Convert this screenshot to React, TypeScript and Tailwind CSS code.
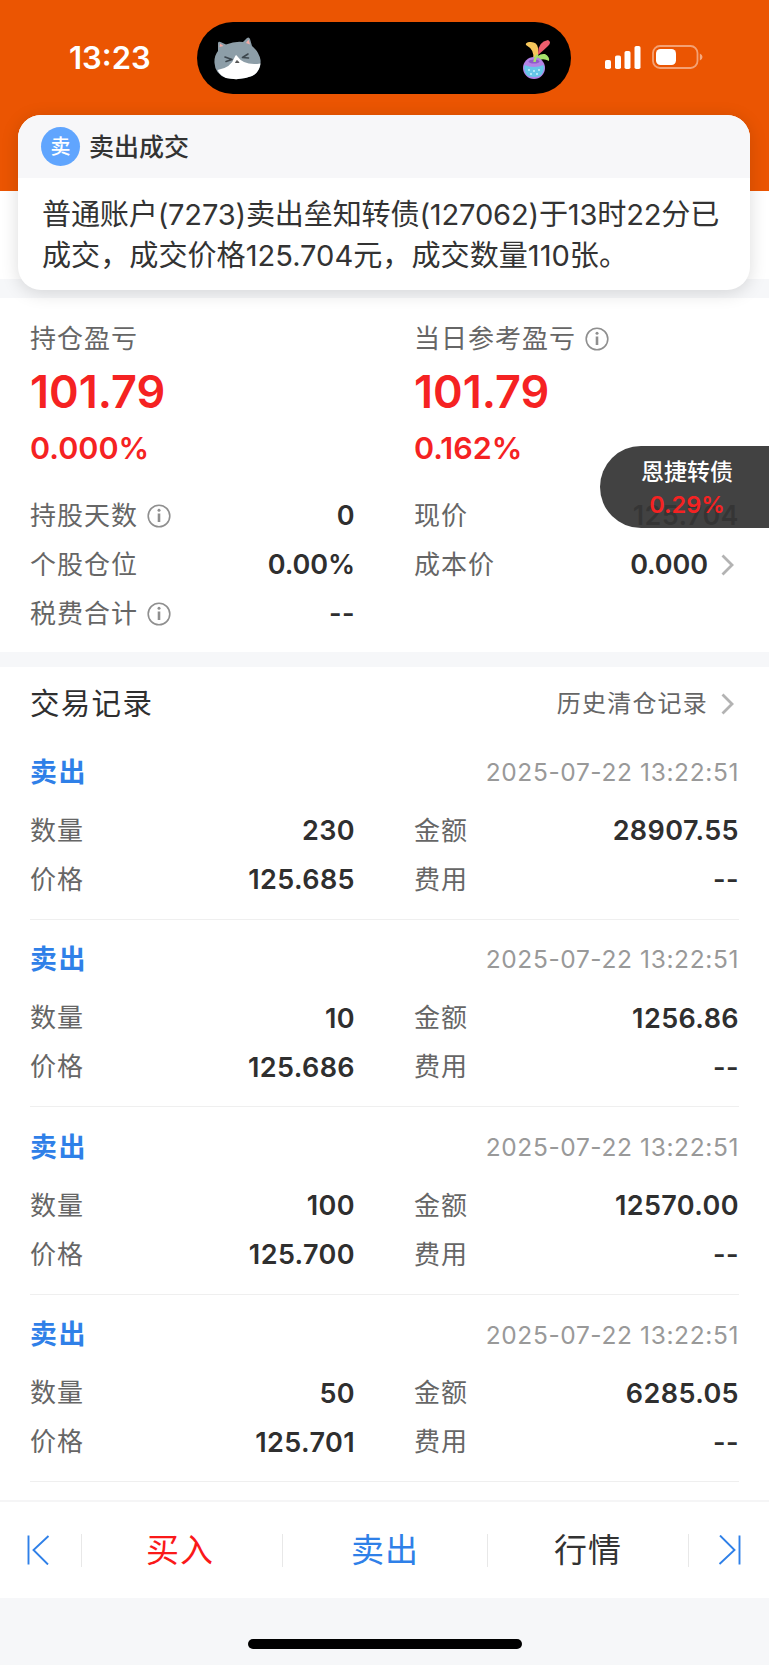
import { Fragment } from "react";

type Trade = {
  quantity: string;
  amount: string;
  price: string;
};

const TRADE_TIME = "2025-07-22 13:22:51";

const TRADES: Trade[] = [
  { quantity: "230", amount: "28907.55", price: "125.685" },
  { quantity: "10", amount: "1256.86", price: "125.686" },
  { quantity: "100", amount: "12570.00", price: "125.700" },
  { quantity: "50", amount: "6285.05", price: "125.701" },
];

const CatFace = () => (
  <svg className="h-[43px] w-[48px]" viewBox="0 0 48 43">
    <path d="M4 14 L4 6 Q4.500 4 6.500 5 L12 7.500 Q21 4 29 5 L33 1 Q35 -0.500 36 2 L38 9 Q45 15 46.500 23 Q47.500 34 38 39 Q26 44 12 41 Q1 37 0.500 26 Q0 19 4 14Z" fill="#8d9ea8" />
    <path d="M5.500 10 L6 6.500 L9.500 9Z M32 6 L34.500 2.500 L36 7.500Z" fill="#f3aaa4" />
    <path d="M3.500 33 Q17 31 21 19.500 Q22 17 23.500 19.500 Q30 29 46.500 26.500 Q45 36 38 39 Q26 44 12 41 Q6 38.500 3.500 33Z" fill="#fff" />
    <path d="M11 20 L18 22.500 L12 24.500 M34 17 L28.500 20.500 L34.500 21" fill="none" stroke="#3d474e" strokeWidth="1.600" strokeLinecap="round" strokeLinejoin="round" />
    <path d="M21.500 25.500 L23 23.500 L25 25.500Z" fill="#555" stroke="#555" />
  </svg>
);

const Plant = () => (
  <svg className="mt-1 h-[42px] w-[30px]" viewBox="0 0 30 42">
    <path d="M11 20 Q13 11 4 6 Q3 4 7 3 Q15 2 16 9 Q17 15 15 21Z" fill="#f6c65b" />
    <path d="M16 14 Q16 3 26 1 Q30 3 26 7 Q22 11 16 16Z" fill="#ee5d6c" />
    <path d="M13 23 Q15 14 23 15 Q28 18 27 22 Q20 18 14 23Z" fill="#a6e36b" />
    <circle cx="12" cy="29" r="11" fill="#b483e6" />
    <path d="M2.500 26 Q12 30 21.500 26 Q23 33 18 37 Q12 39 6 37 Q1 33 2.500 26Z" fill="#67c6e8" />
    <ellipse cx="12" cy="22.500" rx="5.500" ry="2" fill="#8e5cc9" />
    <path d="M12.500 23 Q13 18 16 16" fill="none" stroke="#a6e36b" strokeWidth="2.500" />
    <g fill="#c8f1fb">
      <circle cx="7" cy="31" r="1" />
      <circle cx="12" cy="32" r="1" />
      <circle cx="17" cy="31" r="1" />
      <circle cx="9" cy="35" r="1" />
      <circle cx="15" cy="35" r="1" />
    </g>
  </svg>
);

const Signal = () => (
  <svg className="h-[23px] w-[36px]" viewBox="0 0 36 23" fill="#fff">
    <rect x="0" y="14" width="6" height="9" rx="1.800" />
    <rect x="10" y="9.500" width="6" height="13.500" rx="1.800" />
    <rect x="19.500" y="5" width="6" height="18" rx="1.800" />
    <rect x="29.500" y="0" width="6" height="23" rx="1.800" />
  </svg>
);

const Battery = () => (
  <svg className="h-[24px] w-[51px]" viewBox="0 0 51 24">
    <rect x="1" y="1" width="44.500" height="22" rx="7" fill="none" stroke="#fff" strokeOpacity="0.450" strokeWidth="1.800" />
    <rect x="4" y="4" width="20" height="16" rx="4.500" fill="#fff" />
    <path d="M47.800 8.500 Q50.500 9.500 50.500 12 Q50.500 14.500 47.800 15.500Z" fill="#fff" fillOpacity="0.500" />
  </svg>
);

const Info = () => (
  <svg className="ml-[9px] h-[24px] w-[24px]" viewBox="0 0 24 24">
    <circle cx="12" cy="12" r="10.800" fill="none" stroke="#8f8f8f" strokeWidth="1.600" />
    <circle cx="12" cy="6.300" r="1.500" fill="#8f8f8f" />
    <path d="M12 9.500V18" stroke="#8f8f8f" strokeWidth="2.600" />
  </svg>
);

const Chevron = () => (
  <svg className="mr-[5px] h-[22px] w-[13px]" viewBox="0 0 13 22">
    <path d="M1.500 1.500L11 11L1.500 20.500" fill="none" stroke="#b3b3b3" strokeWidth="2.800" />
  </svg>
);

const SkipArrow = ({ flip }: { flip?: boolean }) => (
  <svg className={`h-[30px] w-[23px] ${flip ? "rotate-180" : ""}`} viewBox="0 0 23 30">
    <path d="M1.500 0.500V29.500M21.500 1L6.500 15L21 29.500" fill="none" stroke="#2f80e8" strokeWidth="1.900" />
  </svg>
);

const Row = ({
  label,
  value,
  info,
  arrow,
  tight,
}: {
  label: string;
  value: string;
  info?: boolean;
  arrow?: boolean;
  tight?: boolean;
}) => (
  <div className="flex h-[49px] items-center">
    <span className="text-[26px] tracking-[1px] text-[#666]">{label}</span>
    {info && <Info />}
    <span
      className={`ml-auto text-[27px] font-semibold text-[#2f2f2f] ${tight ? "tracking-[-0.1px]" : "tracking-[0.4px]"}`}
    >
      {value}
    </span>
    {arrow && (
      <div className="ml-[13px] flex">
        <Chevron />
      </div>
    )}
  </div>
);

const Profit = ({
  label,
  amount,
  percent,
  info,
}: {
  label: string;
  amount: string;
  percent: string;
  info?: boolean;
}) => (
  <div>
    <div className="flex h-10 items-center pt-px">
      <span className="text-[26px] tracking-[1px] text-[#666]">{label}</span>
      {info && <Info />}
    </div>
    <div className="flex h-[66px] items-center text-[45px] font-semibold text-[#f52222]">{amount}</div>
    <div className="flex h-[48px] items-center text-[30.500px] font-semibold text-[#f52222]">{percent}</div>
  </div>
);

const StatusBar = () => (
  <header className="flex h-[191px] items-start bg-[#eb5502]">
    <div className="mt-[38px] w-[197px] pl-[69px] text-[31px] leading-[40px] font-semibold text-white">13:23</div>
    <div className="mt-[22px] flex h-[72px] w-[374px] items-center justify-between rounded-full bg-black pr-[19px] pl-[17px]">
      <CatFace />
      <Plant />
    </div>
    <div className="mt-[45px] ml-[34px] flex items-center gap-[11px]">
      <Signal />
      <Battery />
    </div>
  </header>
);

const Notice = () => (
  <div className="absolute top-[115px] left-[18px] h-[175px] w-[732px] overflow-hidden rounded-[23px] bg-white shadow-[0_3px_18px_rgba(0,0,0,0.14)]">
    <div className="flex h-[63px] items-center bg-[#f7f7f9] pl-[23px]">
      <div className="flex h-[39px] w-[39px] items-center justify-center rounded-full bg-[#60a5fe] pt-px text-[20px] font-medium text-white">
        卖
      </div>
      <span className="ml-[9px] pt-[2px] text-[25px] font-medium text-[#333]">卖出成交</span>
    </div>
    <p className="pt-[16px] pl-6 text-[29.100px] leading-[41px] whitespace-nowrap text-[#333]">
      <span className="tracking-[-0.180px]">普通账户(7273)卖出垒知转债(127062)于13时22分已</span>
      <br />
      成交，成交价格125.704元，成交数量110张。
    </p>
  </div>
);

const FloatingQuote = () => (
  <div className="absolute top-[446px] right-0 flex h-[82px] w-[169px] flex-col items-center rounded-l-full bg-[#363636]/94 pt-[9px] pl-[5px]">
    <span className="text-[23px] leading-[34px] font-medium text-white">恩捷转债</span>
    <span className="text-[23.500px] leading-[31px] font-semibold text-[#f52222]">0.29%</span>
  </div>
);

const TradeItem = ({ trade }: { trade: Trade }) => (
  <div className="h-[187.600px] border-b border-[#efefef] pt-[17px]">
    <div className="flex h-[46px] items-center justify-between">
      <span className="text-[27px] font-bold tracking-[1.500px] text-[#2f80e8]">卖出</span>
      <span className="text-[24.500px] tracking-[0.620px] text-[#999]">{TRADE_TIME}</span>
    </div>
    <div className="mt-[11px] grid grid-cols-[325px_325px] gap-x-[59px]">
      <Row label="数量" value={trade.quantity} />
      <Row label="金额" value={trade.amount} />
      <Row label="价格" value={trade.price} />
      <Row label="费用" value="--" />
    </div>
  </div>
);

const BottomBar = () => (
  <nav className="flex h-[98px] items-center border-t-2 border-[#f5f5f6] bg-white">
    <div className="flex w-[81px] justify-center pr-[5px]">
      <SkipArrow />
    </div>
    <Divider />
    <div className="w-[200px] pr-[4px] text-center text-[33px] tracking-[1px] text-[#fa1919]">买入</div>
    <Divider />
    <div className="w-[204px] text-center text-[33px] tracking-[1px] text-[#2f80e8]">卖出</div>
    <Divider />
    <div className="w-[200px] text-center text-[33px] tracking-[1px] text-[#333]">行情</div>
    <Divider />
    <div className="flex flex-1 justify-center">
      <SkipArrow flip />
    </div>
  </nav>
);

const Divider = () => <div className="h-[33px] w-px bg-[#e8e8e8]" />;

export default function App() {
  return (
    <div className="relative flex h-[1665px] w-[769px] flex-col overflow-hidden bg-white font-['Inter','Noto_Sans_CJK_SC',sans-serif] leading-none">
      <StatusBar />
      <div className="h-[88px] bg-white" />
      <div className="h-[19px] bg-[#f6f7f9]" />

      <section className="h-[354px] px-[30px] pt-5">
        <div className="grid grid-cols-[325px_325px] gap-x-[59px]">
          <Profit label="持仓盈亏" amount="101.79" percent="0.000%" />
          <Profit label="当日参考盈亏" amount="101.79" percent="0.162%" info />
        </div>
        <div className="mt-[19px] grid grid-cols-[325px_325px] gap-x-[59px]">
          <Row label="持股天数" value="0" info />
          <Row label="现价" value="125.704" />
          <Row label="个股仓位" value="0.00%" tight />
          <Row label="成本价" value="0.000" arrow tight />
          <Row label="税费合计" value="--" info />
        </div>
      </section>
      <div className="h-[15px] bg-[#f6f7f9]" />

      <section className="h-[833px] px-[30px]">
        <div className="flex h-[65px] items-center justify-between pt-[8px]">
          <h2 className="text-[29.500px] tracking-[1.300px] text-[#2f2f2f]">交易记录</h2>
          <div className="flex items-center">
            <span className="mr-[13px] text-[24px] tracking-[1.200px] text-[#666]">历史清仓记录</span>
            <Chevron />
          </div>
        </div>
        {TRADES.map((trade) => (
          <Fragment key={trade.price}>
            <TradeItem trade={trade} />
          </Fragment>
        ))}
      </section>

      <BottomBar />
      <footer className="flex h-[67px] justify-center bg-[#f6f7f9] pt-[41px]">
        <div className="h-[10px] w-[274px] rounded-full bg-black" />
      </footer>

      <Notice />
      <FloatingQuote />
    </div>
  );
}
